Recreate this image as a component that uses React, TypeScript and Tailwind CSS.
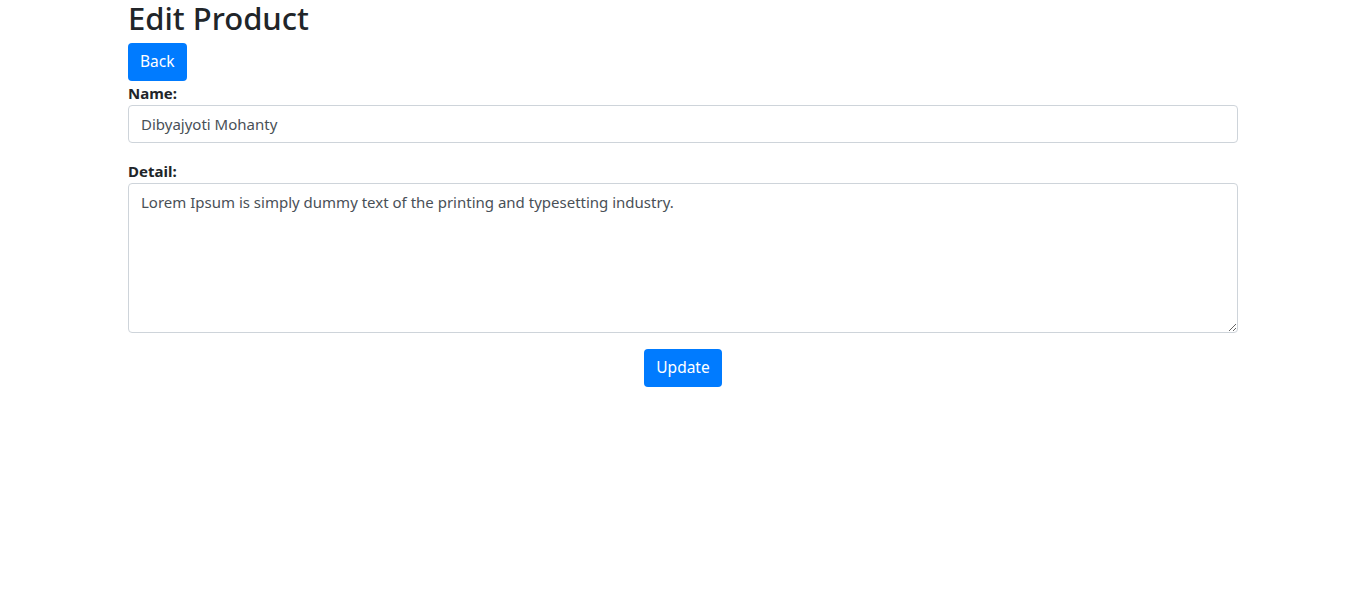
export default function App() {
  return (
    <div className="min-h-screen bg-white font-['Noto_Sans',sans-serif] text-[#212529]">
      <div className="mx-auto w-[1110px]">
        <h1 className="mb-[7px] text-[31px] font-medium leading-[36px]">Edit Product</h1>
        <button className="h-[38px] rounded bg-[#007bff] px-3 text-[15.5px] text-white">Back</button>
        <form>
          <div className="mb-4">
            <label className="block text-[15px] font-bold leading-6">Name:</label>
            <input
              className="block h-[38px] w-full rounded border border-[#ced4da] px-3 text-[15px] text-[#495057] outline-none"
              defaultValue="Dibyajyoti Mohanty"
            />
          </div>
          <div className="mb-4">
            <label className="block text-[15px] font-bold leading-6">Detail:</label>
            <textarea
              className="block h-[150px] w-full rounded border border-[#ced4da] px-3 py-1.5 text-[15px] leading-6 text-[#495057] outline-none"
              defaultValue="Lorem Ipsum is simply dummy text of the printing and typesetting industry."
            />
          </div>
          <div className="flex justify-center">
            <button className="h-[38px] rounded bg-[#007bff] px-3 text-[15.5px] text-white">Update</button>
          </div>
        </form>
      </div>
    </div>
  )
}
